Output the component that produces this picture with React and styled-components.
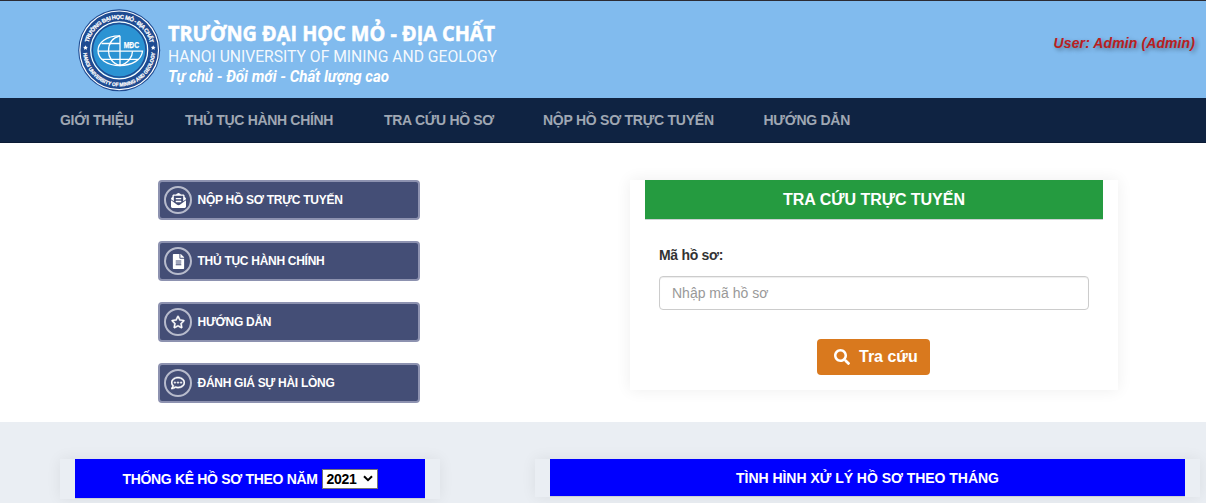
import React from "react";
import styled, { createGlobalStyle } from "styled-components";
import { FaEnvelopeOpenText, FaFileAlt, FaRegStar, FaRegCommentDots, FaSearch } from "react-icons/fa";

const GlobalStyle = createGlobalStyle`
  *, *::before, *::after { box-sizing: border-box; }
  html, body { margin: 0; height: 100%; overflow: hidden; background: #fff; }
  body { font-family: "Liberation Sans", Arial, sans-serif; font-size: 14px; line-height: 20px; color: #333; }
`;

const Page = styled.div`
  height: 503px;
  overflow: hidden;
  display: flex;
  flex-direction: column;
`;

const Header = styled.header`
  flex: none;
  height: 98px;
  border-top: 1px solid #2b2b33;
  background: #81bbee;
  display: flex;
  justify-content: space-between;
  padding: 0 11px 0 70px;
`;

const Brand = styled.svg`
  display: block;
  width: 600px;
  height: 97px;
  overflow: visible;
`;

const UserLabel = styled.div`
  margin-top: 32px;
  font-weight: bold;
  font-style: italic;
  color: #b9201f;
  letter-spacing: 0.1px;
  white-space: nowrap;
  text-shadow: 2px 2px 4px rgba(0, 0, 0, 0.4);
`;

const Nav = styled.nav`
  flex: none;
  height: 45px;
  background: #0f2342;
  border-bottom: 1px solid #0a1a35;
  display: flex;
  padding-left: 60px;
`;

const NavItem = styled.a`
  width: ${(p) => p.$width}px;
  line-height: 44px;
  font-weight: bold;
  color: #9fa7b3;
  white-space: nowrap;
  letter-spacing: ${(p) => p.$track || 0}px;
`;

const Main = styled.main`
  flex: none;
  height: 279px;
  display: flex;
  align-items: flex-start;
  padding: 37px 0 0 158px;
`;

const Shortcuts = styled.div`
  width: 262px;
  display: flex;
  flex-direction: column;
  gap: 21px;
`;

const Shortcut = styled.a`
  height: 40px;
  border: 2px solid #8d92b0;
  border-radius: 4px;
  background: #444e76;
  display: flex;
  align-items: center;
  gap: 5.5px;
  padding-left: 4px;
  color: #fff;
  font-size: 12px;
  font-weight: bold;
  white-space: nowrap;
  letter-spacing: -0.28px;
`;

const IconRing = styled.span`
  width: 28px;
  height: 28px;
  border: 2px solid #b7bbcc;
  border-radius: 50%;
  display: flex;
  align-items: center;
  justify-content: center;
  font-size: ${(p) => p.$size}px;
  svg { stroke: #fff; stroke-width: ${(p) => p.$weight}; }
`;

const Panel = styled.section`
  width: ${(p) => p.$width}px;
  margin-left: ${(p) => p.$left}px;
  padding: 0 15px;
  box-shadow: 0 0 15px rgba(0, 0, 0, 0.07);
`;

const PanelTitle = styled.h3`
  margin: 0;
  height: ${(p) => p.$height || 40}px;
  display: flex;
  align-items: center;
  justify-content: center;
  gap: 4px;
  background: ${(p) => p.$color};
  border-bottom: 1px solid #ccd2d4;
  color: #fff;
  font-size: ${(p) => p.$size || 14}px;
  font-weight: bold;
  white-space: nowrap;
  letter-spacing: ${(p) => p.$track || 0}px;
`;

const Form = styled.form`
  height: 170px;
  padding: 25px 14px 0;
  display: flex;
  flex-direction: column;
`;

const Label = styled.label`
  font-weight: bold;
  line-height: 20px;
  letter-spacing: -0.3px;
`;

const Input = styled.input`
  width: 100%;
  height: 34px;
  margin: 11px 0 29px;
  padding: 6px 12px;
  border: 1px solid #ccc;
  border-radius: 4px;
  background: #fff;
  box-shadow: inset 0 1px 1px rgba(0, 0, 0, 0.075);
  font: 14px "Liberation Sans", Arial, sans-serif;
  &::placeholder { color: #999; opacity: 1; }
`;

const SearchButton = styled.button`
  align-self: center;
  width: 113px;
  height: 36px;
  margin-right: 1px;
  border: 0;
  border-radius: 4px;
  background: #d9791e;
  color: #fff;
  display: flex;
  align-items: center;
  gap: 9px;
  padding: 0 0 1px 17px;
  font: bold 16px "Liberation Sans", Arial, sans-serif;
  white-space: nowrap;
`;

const Stats = styled.section`
  flex: 1;
  background: #eaeef3;
  display: flex;
  align-items: flex-start;
  padding: 37px 0 0 60px;
`;

const YearPicker = styled.button`
  width: 56px;
  height: 20px;
  padding: 0 4px;
  border: 1px solid #767676;
  border-radius: 0;
  background: #fff;
  color: #000;
  display: flex;
  align-items: center;
  justify-content: space-between;
  font: bold 14px "Liberation Sans", Arial, sans-serif;
  letter-spacing: -0.3px;
`;

const navItems = [
  { label: "GIỚI THIỆU", width: 125, track: -0.3 },
  { label: "THỦ TỤC HÀNH CHÍNH", width: 199, track: -0.33 },
  { label: "TRA CỨU HỒ SƠ", width: 159, track: -0.31 },
  { label: "NỘP HỒ SƠ TRỰC TUYẾN", width: 220.5, track: -0.25 },
  { label: "HƯỚNG DẪN", width: 100, track: -0.26 },
];

const shortcuts = [
  { label: "NỘP HỒ SƠ TRỰC TUYẾN", Icon: FaEnvelopeOpenText, size: 15, weight: 0 },
  { label: "THỦ TỤC HÀNH CHÍNH", Icon: FaFileAlt, size: 15, weight: 0 },
  { label: "HƯỚNG DẪN", Icon: FaRegStar, size: 14, weight: 20 },
  { label: "ĐÁNH GIÁ SỰ HÀI LÒNG", Icon: FaRegCommentDots, size: 14, weight: 16 },
];

function BrandBanner() {
  return (
    <Brand viewBox="70 1 600 97" fill="#fff">
      <defs>
        <path id="arcTop" d="M 87.5 50.5 A 31.7 31.7 0 0 1 150.9 50.5" />
        <path id="arcBottom" d="M 83.3 50.5 A 35.9 35.9 0 0 0 155.1 50.5" />
      </defs>
      <circle cx="119.2" cy="50.3" r="41" fill="#1f4b91" />
      <circle cx="119.2" cy="50.3" r="39.3" fill="none" stroke="#fff" strokeWidth="1.2" />
      <circle cx="119.2" cy="50.3" r="28.5" fill="#2b93d3" stroke="#fff" strokeWidth="1.2" />
      <circle cx="119.2" cy="50.3" r="26.8" fill="none" stroke="#1f4b91" strokeWidth="1.4" />
      <g fontFamily="Liberation Sans, Arial, sans-serif" fontWeight="bold" stroke="#fff" strokeWidth="0.25">
        <text fontSize="5.7">
          <textPath href="#arcTop" startOffset="8" textLength="84">TRƯỜNG ĐẠI HỌC MỎ - ĐỊA CHẤT</textPath>
        </text>
        <text fontSize="5.2">
          <textPath href="#arcBottom" startOffset="2.5" textLength="108" lengthAdjust="spacingAndGlyphs">HANOI UNIVERSITY OF MINING AND GEOLOGY</textPath>
        </text>
        <text x="123.7" y="48" fontSize="9.5" textLength="15.5" lengthAdjust="spacingAndGlyphs">MĐC</text>
      </g>
      <path d="M85.5 45.2 l.7 1.5 1.7.2-1.2 1.2.3 1.7-1.5-.8-1.5.8.3-1.7-1.2-1.2 1.7-.2z" />
      <path d="M153.2 45.2 l.7 1.5 1.7.2-1.2 1.2.3 1.7-1.5-.8-1.5.8.3-1.7-1.2-1.2 1.7-.2z" />
      <g fill="none" stroke="#fff" strokeWidth="1.3">
        <path d="M120 35.8 C106 35.5 98 43 98 50.5 C98 59 107 65.5 120 65.5 C132 65.5 141.5 60 142.5 51.2 H98" />
        <path d="M120 35.8 V65.5 M120 35.8 C111 38 108.5 45 108.5 51 C108.5 57 112 63.5 120 65.5 C128 63.5 132.5 57 132.5 51.2" />
        <path d="M101.5 43.5 H120 M101.5 59.3 H138" />
      </g>
      <text x="168" y="41" fontFamily="Open Sans, sans-serif" fontSize="21" fontWeight="bold" stroke="#fff" strokeWidth="0.5" textLength="327" lengthAdjust="spacingAndGlyphs">TRƯỜNG ĐẠI HỌC MỎ - ĐỊA CHẤT</text>
      <text x="168" y="62" fontFamily="Roboto, sans-serif" fontSize="16" fontWeight="400" fillOpacity="0.93" textLength="329" lengthAdjust="spacingAndGlyphs">HANOI UNIVERSITY OF MINING AND GEOLOGY</text>
      <text x="168" y="82" fontFamily="Roboto, sans-serif" fontSize="16" fontWeight="bold" fontStyle="italic" textLength="221" lengthAdjust="spacingAndGlyphs">Tự chủ - Đổi mới - Chất lượng cao</text>
    </Brand>
  );
}

function Chevron() {
  return (
    <svg width="10" height="7" viewBox="0 0 10 7" fill="none" stroke="#000" strokeWidth="2">
      <path d="M1 1.2 5 5.2 9 1.2" />
    </svg>
  );
}

export default function App() {
  return (
    <Page>
      <GlobalStyle />
      <Header>
        <BrandBanner />
        <UserLabel>User: Admin (Admin)</UserLabel>
      </Header>
      <Nav>
        {navItems.map((n) => (
          <NavItem key={n.label} $width={n.width} $track={n.track}>{n.label}</NavItem>
        ))}
      </Nav>
      <Main>
        <Shortcuts>
          {shortcuts.map(({ label, Icon, size, weight }) => (
            <Shortcut key={label}>
              <IconRing $size={size} $weight={weight}><Icon /></IconRing>
              {label}
            </Shortcut>
          ))}
        </Shortcuts>
        <Panel $width={488} $left={210}>
          <PanelTitle $color="#259b40" $size={16} $track={-0.03}>TRA CỨU TRỰC TUYẾN</PanelTitle>
          <Form>
            <Label htmlFor="code">Mã hồ sơ:</Label>
            <Input id="code" placeholder="Nhập mã hồ sơ" />
            <SearchButton type="button"><FaSearch />Tra cứu</SearchButton>
          </Form>
        </Panel>
      </Main>
      <Stats>
        <Panel $width={380} $left={0}>
          <PanelTitle $color="#0000ff" $track={-0.32}>
            THỐNG KÊ HỒ SƠ THEO NĂM
            <YearPicker type="button">2021<Chevron /></YearPicker>
          </PanelTitle>
        </Panel>
        <Panel $width={665} $left={95}>
          <PanelTitle $color="#0000ff" $height={38} $track={-0.03}>TÌNH HÌNH XỬ LÝ HỒ SƠ THEO THÁNG</PanelTitle>
        </Panel>
      </Stats>
    </Page>
  );
}
